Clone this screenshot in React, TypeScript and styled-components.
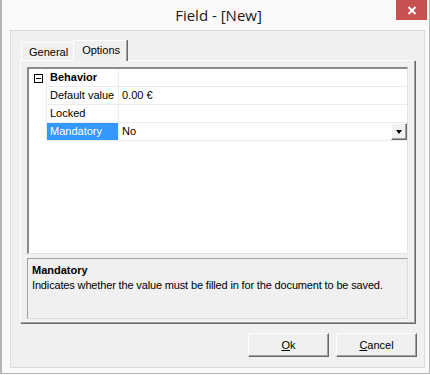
import React from "react";
import styled, { createGlobalStyle } from "styled-components";

const Global = createGlobalStyle`
  html, body { margin: 0; padding: 0; background: #ffffff; }
  body { font-family: "Liberation Sans", Arial, sans-serif; font-size: 11px; color: #000; }
  * { box-sizing: border-box; }
`;

const Window = styled.div`
  width: 430px;
  height: 374px;
  display: flex;
  flex-direction: column;
  background: #fafafa;
  border-left: 2px solid #b4b4b4;
  border-right: 1px solid #b4b4b4;
  border-bottom: 1px solid #b4b4b4;
`;

const TitleBar = styled.div`
  height: 30px;
  flex: none;
  position: relative;
  display: flex;
  align-items: center;
  justify-content: center;
`;

const Title = styled.div`
  font-family: "Open Sans", "Noto Sans", sans-serif;
  font-size: 15px;
  color: #1a1a1a;
  margin-left: 6px;
  margin-top: -1px;
`;

const CloseButton = styled.div`
  position: absolute;
  top: 0;
  right: 2px;
  width: 31px;
  height: 20px;
  background: #c75050;
  display: flex;
  align-items: center;
  justify-content: center;
`;

const Frame = styled.div`
  flex: 1;
  display: flex;
  padding: 0 4px 5px 8px;
`;

const Client = styled.div`
  flex: 1;
  display: flex;
  flex-direction: column;
  background: #f0f0f0;
  border: 1px solid #dadada;
  padding: 9px 9px 9px 9px;
`;

const TabStrip = styled.div`
  display: flex;
  align-items: flex-end;
  height: 20px;
  padding-left: 1px;
  position: relative;
  z-index: 1;
`;

const Tab = styled.div<{ $active?: boolean }>`
  height: ${(p) => (p.$active ? "21px" : "18px")};
  margin-bottom: ${(p) => (p.$active ? "-1px" : "0")};
  padding: ${(p) => (p.$active ? "3px 6px 0 8px" : "3px 5px 0 7px")};
  background: #f0f0f0;
  border-top: 1px solid #ffffff;
  border-left: 1px solid #ffffff;
  border-right: ${(p) => (p.$active ? "1px solid #a0a0a0" : "none")};
  box-shadow: ${(p) => (p.$active ? "1px 0 0 #696969" : "none")};
  line-height: 13px;
  white-space: nowrap;
`;

const Panel = styled.div`
  height: 263px;
  display: flex;
  flex-direction: column;
  gap: 4px;
  padding: 6px 6px 3px 6px;
  border-top: 1px solid #ffffff;
  border-left: 1px solid #ffffff;
  border-right: 1px solid #a0a0a0;
  border-bottom: 1px solid #a0a0a0;
  box-shadow: 1px 1px 0 #696969;
`;

const Grid = styled.div`
  height: 187px;
  background: #ffffff;
  border-top: 2px solid #8a8a8a;
  border-left: 2px solid #8a8a8a;
  border-right: 1px solid #e3e3e3;
  border-bottom: 1px solid #e3e3e3;
  display: flex;
  flex-direction: column;
`;

const Row = styled.div`
  display: grid;
  grid-template-columns: 18px 72px 1fr;
  height: 18px;
`;

const ExpandCell = styled.div`
  border-right: 1px solid #ececec;
  display: flex;
  align-items: center;
  justify-content: center;
  padding-left: 1px;
`;

const ExpandBox = styled.div`
  width: 9px;
  height: 9px;
  border: 1px solid #000;
  position: relative;
  &::after {
    content: "";
    position: absolute;
    left: 1px;
    right: 1px;
    top: 3px;
    height: 1px;
    background: #000;
  }
`;

const NameCell = styled.div<{ $selected?: boolean; $bold?: boolean }>`
  border-right: 1px solid #ececec;
  border-bottom: 1px solid #ececec;
  padding-left: 3px;
  line-height: 17px;
  font-weight: ${(p) => (p.$bold ? 700 : 400)};
  background: ${(p) => (p.$selected ? "#3399ff" : "transparent")};
  color: ${(p) => (p.$selected ? "#ffffff" : "#000000")};
  white-space: nowrap;
  overflow: hidden;
`;

const ValueCell = styled.div`
  border-bottom: 1px solid #ececec;
  padding-left: 3px;
  line-height: 17px;
  display: flex;
  align-items: flex-start;
  justify-content: space-between;
  white-space: nowrap;
`;

const DropButton = styled.div`
  width: 16px;
  height: 17px;
  background: #f0f0f0;
  border-top: 1px solid #ffffff;
  border-left: 1px solid #ffffff;
  border-right: 1px solid #696969;
  border-bottom: 1px solid #696969;
  box-shadow: inset -1px -1px 0 #a0a0a0;
  display: flex;
  align-items: center;
  justify-content: center;
`;

const Triangle = styled.div`
  width: 0;
  height: 0;
  border-left: 3.5px solid transparent;
  border-right: 3.5px solid transparent;
  border-top: 4px solid #000;
  margin-top: 1px;
`;

const Description = styled.div`
  height: 61px;
  border-top: 1px solid #a0a0a0;
  border-left: 1px solid #a0a0a0;
  border-right: 1px solid #dcdcdc;
  border-bottom: 1px solid #dcdcdc;
  padding: 4px 4px;
  line-height: 15px;
`;

const DescTitle = styled.div`
  font-weight: 700;
`;

const DescText = styled.div`
  letter-spacing: -0.15px;
`;

const ButtonRow = styled.div`
  display: flex;
  justify-content: flex-end;
  gap: 7px;
  margin-top: 10px;
  margin-right: -2px;
`;

const Button = styled.div`
  width: 81px;
  height: 24px;
  background: #f0f0f0;
  border-top: 1px solid #ffffff;
  border-left: 1px solid #ffffff;
  border-right: 1px solid #696969;
  border-bottom: 1px solid #696969;
  box-shadow: inset -1px -1px 0 #a0a0a0;
  display: flex;
  align-items: center;
  justify-content: center;
  padding-bottom: 1px;
`;

const U = styled.span`
  text-decoration: underline;
`;

const rows = [
  { name: "Default value", value: "0.00 €" },
  { name: "Locked", value: "" },
  { name: "Mandatory", value: "No", selected: true, drop: true },
];

export default function App() {
  return (
    <>
      <Global />
      <Window>
        <TitleBar>
          <Title>Field - [New]</Title>
          <CloseButton>
            <svg width="10" height="9" viewBox="0 0 10 9">
              <path d="M1.5 1 L8.5 8 M8.5 1 L1.5 8" stroke="#fff" strokeWidth="2" />
            </svg>
          </CloseButton>
        </TitleBar>
        <Frame>
          <Client>
            <TabStrip>
              <Tab>General</Tab>
              <Tab $active>Options</Tab>
            </TabStrip>
            <Panel>
              <Grid>
                <Row>
                  <ExpandCell>
                    <ExpandBox />
                  </ExpandCell>
                  <NameCell $bold>Behavior</NameCell>
                  <ValueCell />
                </Row>
                {rows.map((r) => (
                  <Row key={r.name}>
                    <ExpandCell />
                    <NameCell $selected={r.selected}>{r.name}</NameCell>
                    <ValueCell>
                      <span>{r.value}</span>
                      {r.drop && (
                        <DropButton>
                          <Triangle />
                        </DropButton>
                      )}
                    </ValueCell>
                  </Row>
                ))}
              </Grid>
              <Description>
                <DescTitle>Mandatory</DescTitle>
                <DescText>
                  Indicates whether the value must be filled in for the document to be saved.
                </DescText>
              </Description>
            </Panel>
            <ButtonRow>
              <Button>
                <span>
                  <U>O</U>k
                </span>
              </Button>
              <Button>
                <span>
                  <U>C</U>ancel
                </span>
              </Button>
            </ButtonRow>
          </Client>
        </Frame>
      </Window>
    </>
  );
}
